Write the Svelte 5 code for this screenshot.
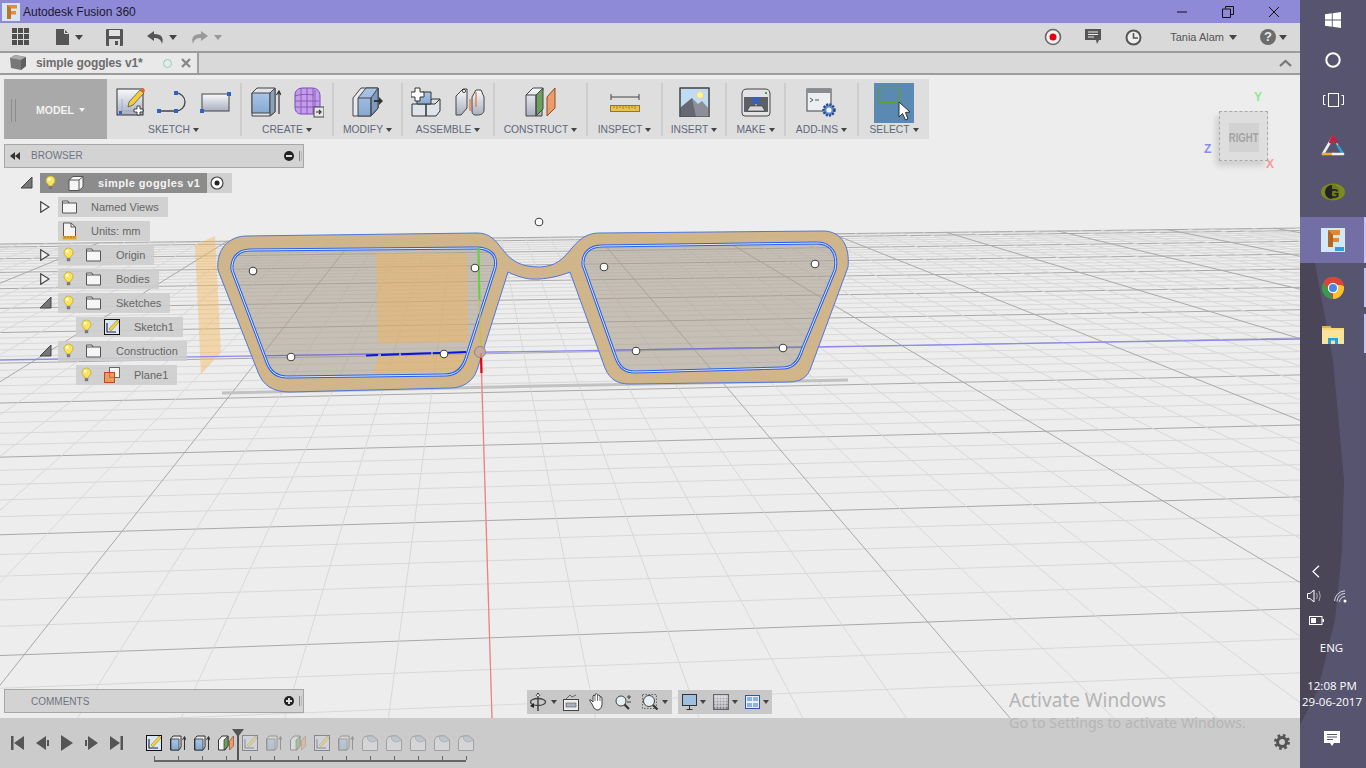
<script>
  const horiz = [];
  for (let i = -2; i <= 51; i++) {
    const n = i / 5;
    const y0 = 100 + 1 / (0.0018 + 0.0005 * n);
    horiz.push({ y0, y1: y0 - (y0 - 27) * 0.0748, major: i % 5 === 0 });
  }
  const depth = [];
  for (let k = -24; k <= 38; k++) {
    const xb = 492 + 103.6 * k;
    const t = 148.1 / (628 + 0.01248 * (xb - 472));
    depth.push({ x1: 472 + (xb - 472) * t, y1: 90 + 628 * t, x2: xb, major: k % 5 === 0 && k !== 0 });
  }
  const points = [[253,271],[475,268],[291,357],[444,354],[604,267],[815,264],[636,351],[783,348],[539,222]];
  const groups = [
    { label: 'SKETCH', w: 135, icons: ['newsketch', 'spline', 'rectangle'], gap: 'g3' },
    { label: 'CREATE', w: 92, icons: ['extrude', 'form'], gap: 'g1' },
    { label: 'MODIFY', w: 69, icons: ['modify'], gap: 'g1' },
    { label: 'ASSEMBLE', w: 92, icons: ['newcomp', 'joint'], gap: 'g1' },
    { label: 'CONSTRUCT', w: 93, icons: ['construct'], gap: 'g1' },
    { label: 'INSPECT', w: 75, icons: ['ruler'], gap: 'g1' },
    { label: 'INSERT', w: 64, icons: ['insert'], gap: 'g1' },
    { label: 'MAKE', w: 59, icons: ['make'], gap: 'g1' },
    { label: 'ADD-INS', w: 73, icons: ['addins'], gap: 'g1' },
    { label: 'SELECT', w: 70, icons: ['select'], gap: 'g1' }
  ];
  const rows = [
    { label: 'Named Views', d: 'd1', exp: 'closed', icon: 'folder' },
    { label: 'Units: mm', d: 'd1', icon: 'units' },
    { label: 'Origin', d: 'd1', exp: 'closed', bulb: true, icon: 'folder' },
    { label: 'Bodies', d: 'd1', exp: 'closed', bulb: true, icon: 'folder' },
    { label: 'Sketches', d: 'd1', exp: 'open', bulb: true, icon: 'folder' },
    { label: 'Sketch1', d: 'd2', bulb: true, icon: 'sk' },
    { label: 'Construction', d: 'd1', exp: 'open', bulb: true, icon: 'folder' },
    { label: 'Plane1', d: 'd2', bulb: true, icon: 'plane' }
  ];
  const steps = [
    ['sk', 1], ['ext', 1], ['ext', 1], ['con', 1], ['sk', 0], ['ext', 0], ['con', 0], ['sk', 0], ['ext', 0],
    ['fil', 0], ['fil', 0], ['fil', 0], ['fil', 0], ['fil', 0]
  ];
</script>

{#snippet bulb()}
  <svg width="11" height="16" viewBox="0 0 11 16"><path d="M5.5 1a4.5 4.5 0 0 0-2.6 8.2c.6.5.8 1 .8 1.8h3.6c0-.8.2-1.3.8-1.8A4.5 4.5 0 0 0 5.5 1z" fill="#fbe45c" stroke="#b8a23a" stroke-width=".7"/><circle cx="4.3" cy="4.3" r="1.6" fill="#fffbd0"/><rect x="3.8" y="11.2" width="3.4" height="3" fill="#777"/></svg>
{/snippet}

{#snippet ic(name)}
  {#if name === 'newsketch'}
    <svg width="30" height="30" viewBox="0 0 30 30"><rect x="1" y="2" width="26" height="26" fill="url(#gSteel)" stroke="#333" stroke-width="1"/><rect x="3" y="24" width="3" height="3" fill="#2f62c8"/><path d="M6 24 L6 12 M6 24 L18 24" stroke="#8da4c8" stroke-width=".7"/><path d="M13 15 L24 3 L28 6 L17 18 L12 20 Z" fill="#f4cf3a" stroke="#555" stroke-width=".8"/><path d="M24 3 L28 6 L29 3 L27 1 Z" fill="#d8663a"/><path d="M21 19h3v3h3v3h-3v3h-3v-3h-3v-3h3z" fill="#fff" stroke="#333" stroke-width=".9"/></svg>
  {:else if name === 'spline'}
    <svg width="32" height="30" viewBox="0 0 32 30"><path d="M2 24 H19 A9 9 0 0 0 19 6" fill="none" stroke="#444" stroke-width="1.3"/><rect x="0" y="22" width="4" height="4" fill="#2f62c8"/><rect x="17" y="22" width="4" height="4" fill="#2f62c8"/><rect x="17" y="4" width="4" height="4" fill="#2f62c8"/></svg>
  {:else if name === 'rectangle'}
    <svg width="31" height="30" viewBox="0 0 31 30"><rect x="2" y="7" width="27" height="17" fill="url(#gSteel)" stroke="#444"/><rect x="0" y="22" width="4" height="4" fill="#2f62c8"/><rect x="27" y="5" width="4" height="4" fill="#2f62c8"/></svg>
  {:else if name === 'extrude'}
    <svg width="30" height="30" viewBox="0 0 30 30"><path d="M1 6 L6 1 H24 V25 L19 29 H1 Z" fill="#dfe3ea" stroke="#444"/><path d="M1 6 H19 V26 H1 Z" fill="url(#gBlue)" stroke="#444"/><path d="M19 6 L24 1 V25 L19 29 Z" fill="#8ea1bb" stroke="#444"/><path d="M28 27 V5 M25.5 8 L28 4 L30 8" fill="none" stroke="#333" stroke-width="1.2"/></svg>
  {:else if name === 'form'}
    <svg width="30" height="31" viewBox="0 0 30 31"><path d="M1 8 C1 3 5 1 9 1 H18 C23 1 26 4 26 9 V20 C26 25 22 27 18 27 H7 C3 27 1 24 1 20 Z" fill="#c49ce8" stroke="#7a4bb8"/><path d="M1 9 C6 7 14 7 20 8 M7 1 V27 M13 1 V27 M19 1 V27 M1 14 H25 M1 20 H25 M21 3 V26" fill="none" stroke="#7a4bb8" stroke-width=".8"/><rect x="20" y="20" width="10" height="10" fill="#e6e6e6" stroke="#444"/><path d="M22 25 H26 M25 23 L27 25 L25 27" fill="none" stroke="#333" stroke-width="1.2"/></svg>
  {:else if name === 'modify'}
    <svg width="31" height="30" viewBox="0 0 31 30"><path d="M1 11 L9 1 H26 V21 L19 29 H1 Z" fill="#e6e9ee" stroke="#444"/><path d="M6 11 L14 1 H26 V21 L19 29 H6 Z" fill="url(#gBlue)" stroke="#444"/><path d="M19 11 L26 1 V21 L19 29 Z" fill="#7e9ac0" stroke="#444"/><path d="M6 11 H19 V29" fill="none" stroke="#444"/><path d="M22 13 H27 V10 L31 14 L27 18 V15 H22 Z" fill="#333"/></svg>
  {:else if name === 'newcomp'}
    <svg width="31" height="30" viewBox="0 0 31 30"><path d="M1 17 H15 V29 H1 Z M15 17 H24 L29 12 V24 L25 29 H15 Z" fill="#dfe3ea" stroke="#333"/><path d="M16 17 L21 12 H29" fill="none" stroke="#333"/><path d="M6 10 L11 5 H20 V17 H6 Z" fill="url(#gBlue)" stroke="#333"/><path d="M4 1h5v4h4v5H9v4H4v-4H0V5h4z" fill="#fff" stroke="#333"/></svg>
  {:else if name === 'joint'}
    <svg width="30" height="30" viewBox="0 0 30 30"><path d="M1 9 L8 2 H12 V21 L6 28 H1 Z" fill="url(#gSteel)" stroke="#444"/><circle cx="9" cy="4" r="1.6" fill="#fff" stroke="#444"/><path d="M17 10 L21 3 L26 3 L29 10 V23 C29 27 25 28 23 28 H20 C18 28 17 26 17 24 Z" fill="url(#gSteel)" stroke="#444"/><path d="M15 12 V24 M21 5 V20" stroke="#e07030" stroke-width="1.2"/></svg>
  {:else if name === 'construct'}
    <svg width="31" height="30" viewBox="0 0 31 30"><path d="M1 8 L8 1 H18 L17 8 V29 H1 Z" fill="url(#gSteel)" stroke="#444"/><path d="M11 8 L18 1 V22 L11 29 Z" fill="#6aa05a" stroke="#444"/><path d="M1 8 H11 V29" fill="none" stroke="#444"/><path d="M22 10 L30 1 V21 L22 29 Z" fill="#ee9b6a" stroke="#8a4a2a"/></svg>
  {:else if name === 'ruler'}
    <svg width="30" height="30" viewBox="0 0 30 30"><path d="M1 7 V13 M1 10 H29 M29 7 V13" stroke="#444" stroke-width="1" fill="none"/><rect x="0.5" y="18.500" width="29" height="6" fill="#ecc248" stroke="#8a7a30"/><path d="M4 19v2M7 19v3M10 19v2M13 19v3M16 19v2M19 19v3M22 19v2M25 19v3" stroke="#7a6a20" stroke-width=".7"/></svg>
  {:else if name === 'insert'}
    <svg width="31" height="30" viewBox="0 0 31 30"><rect x="1" y="1" width="29" height="29" fill="#bfdcf2" stroke="#444"/><circle cx="21" cy="8" r="3.5" fill="#fdf1a8" stroke="#e8c860" stroke-width=".6"/><path d="M1 30 V21 L13 11 L19 17 L23 14 L30 22 V30 Z" fill="#8d8f98"/><path d="M13 11 L17 30 H1 V21 Z" fill="#666873"/><rect x="1" y="1" width="29" height="29" fill="none" stroke="#444"/></svg>
  {:else if name === 'make'}
    <svg width="30" height="30" viewBox="0 0 30 30"><path d="M1 7 Q1 2 6 2 H24 Q29 2 29 7 V26 Q29 29 26 29 H4 Q1 29 1 26 Z" fill="#e3e3e6" stroke="#444"/><circle cx="25" cy="6" r="1" fill="#1a8a2a"/><rect x="3" y="10" width="24" height="15" fill="#5e6068"/><rect x="12" y="10" width="6" height="7" fill="#2f62c8"/><path d="M15 17v3" stroke="#ddd"/><path d="M6 24 L9 19 H21 L24 24 Z" fill="#d8d8d8" stroke="#333" stroke-width=".6"/></svg>
  {:else if name === 'addins'}
    <svg width="31" height="30" viewBox="0 0 31 30"><rect x="1" y="2" width="24" height="22" fill="#eceef2" stroke="#444"/><rect x="1" y="2" width="24" height="4" fill="#8a8c94"/><path d="M4 11 L7 13 L4 15 M9 13 H13" fill="none" stroke="#444" stroke-width=".9"/><circle cx="23" cy="23" r="5.5" fill="#5e8ad0" stroke="#2d4a80" stroke-width="2.5" stroke-dasharray="2 1.2"/><circle cx="23" cy="23" r="2.6" fill="#f0f3fa"/></svg>
  {:else if name === 'select'}
    <svg class="selsvg" width="40" height="40" viewBox="0 0 40 40"><rect width="40" height="40" fill="#5a8ab2"/><rect x="5.5" y="4.500" width="20" height="15" fill="none" stroke="#62a02c" stroke-width="1.200"/><path d="M25 19 V34 L28.500 30.500 L31.500 37 L34 36 L31.500 29.500 L36 29 Z" fill="#fff" stroke="#222" stroke-width=".9"/></svg>
  {:else if name === 'folder'}
    <svg width="15" height="14" viewBox="0 0 15 14"><path d="M.5 13 V1 H6 L7 3 H14.500 V13 Z" fill="#f6f6f6" stroke="#555"/><path d="M.5 3H7" stroke="#555"/></svg>
  {:else if name === 'units'}
    <svg width="15" height="18" viewBox="0 0 15 18"><path d="M1.500 15 V1 H9 L13.500 5 V15 Z" fill="#f4f4f4" stroke="#555"/><path d="M9 1V5H13.500" fill="none" stroke="#555"/><rect x=".5" y="14" width="14" height="3.500" fill="#dda92e"/><path d="M3 14v2M6 14v2M9 14v2M12 14v2" stroke="#7a5a10" stroke-width=".6"/></svg>
  {:else if name === 'sk'}
    <svg width="16" height="16" viewBox="0 0 16 16"><rect x=".5" y=".5" width="15" height="15" fill="#dce7f5" stroke="#111"/><path d="M3 4 V13 H12" fill="none" stroke="#224" stroke-width="1.1"/><path d="M5 10 L13 1 L15 3 L7 12 Z" fill="#f7d23a" stroke="#6a5a10" stroke-width=".4"/></svg>
  {:else if name === 'plane'}
    <svg width="16" height="16" viewBox="0 0 16 16"><rect x="5.500" y=".5" width="10" height="10" fill="#f4f4f4" stroke="#666"/><rect x=".5" y="5.500" width="10" height="10" fill="#ee9a5e" stroke="#c04a1a"/><path d="M5.500 5.500h5v5h-5z" fill="none" stroke="#c04a1a" stroke-width=".6"/></svg>
  {:else if name === 'ext'}
    <svg width="16" height="16" viewBox="0 0 16 16"><path d="M0.500 4 L3 1 H11 V12 L9 15 H0.500 Z" fill="#e6e9ee" stroke="#333"/><path d="M1 4 H9 V15 H1 Z" fill="url(#gBlue)" stroke="#333" stroke-width=".8"/><path d="M14.500 15 V2 M12.500 5 L14.500 1.500 L16 5" fill="none" stroke="#333"/></svg>
  {:else if name === 'con'}
    <svg width="16" height="16" viewBox="0 0 16 16"><path d="M.5 5 L4 1 H10 V11 L7 15 H.5 Z" fill="#f2f3f5" stroke="#333"/><path d="M6 5 L10 1 V11 L6 15 Z" fill="#6aa05a" stroke="#333" stroke-width=".7"/><path d="M11.500 6 L15.500 1 V11 L11.500 15 Z" fill="#ee9b6a" stroke="#8a4a2a" stroke-width=".7"/></svg>
  {:else if name === 'fil'}
    <svg width="16" height="16" viewBox="0 0 16 16"><path d="M.5 5 Q2 1 5 1 H11 L15.500 5 V15.500 H.5 Z" fill="#e8eaee" stroke="#555"/><path d="M5 1 Q5 7 11 7 L15.500 5 L11 1 Z" fill="#a9bcd4" stroke="#555" stroke-width=".6"/></svg>
  {/if}
{/snippet}

<svg class="defs" width="0" height="0" aria-hidden="true">
  <defs>
    <linearGradient id="gSteel" x1="0" y1="0" x2="0" y2="1"><stop offset="0" stop-color="#f8f9fb"/><stop offset="1" stop-color="#a9afbe"/></linearGradient>
    <linearGradient id="gBlue" x1="0" y1="0" x2="0" y2="1"><stop offset="0" stop-color="#a9c6e8"/><stop offset="1" stop-color="#86a8d0"/></linearGradient>
  </defs>
</svg>

<div class="screen">
  <div class="app">
    <header class="titlebar">
      <svg class="applogo" width="18" height="18" viewBox="0 0 18 18"><rect width="18" height="18" fill="#d6e6f2"/><path d="M5 2 H15 V5.500 H9 V8 H14 V11.500 H9 V16 H5 Z" fill="#e08e3a"/><path d="M5 2 L9 5.500 V16 H5 Z" fill="#bd7426"/></svg>
      <span class="apptitle">Autodesk Fusion 360</span>
      <div class="winbtns">
        <svg width="12" height="12" viewBox="0 0 12 12"><path d="M1 6 H11" stroke="#111" stroke-width="1"/></svg>
        <svg width="12" height="12" viewBox="0 0 12 12"><path d="M3.500 2.500 V.5 H11.500 V8.500 H9 M.5 3 H8.500 V11.500 H.5 Z" fill="none" stroke="#111"/></svg>
        <svg width="12" height="12" viewBox="0 0 12 12"><path d="M1 1 L11 11 M11 1 L1 11" stroke="#111" stroke-width="1"/></svg>
      </div>
    </header>

    <div class="qat">
      <svg class="q-grid" width="18" height="18" viewBox="0 0 18 18" fill="#4f4f4f"><rect width="5" height="5"/><rect x="6" width="5" height="5"/><rect x="12" width="5" height="5"/><rect y="6" width="5" height="5"/><rect x="6" y="6" width="5" height="5"/><rect x="12" y="6" width="5" height="5"/><rect y="12" width="5" height="5"/><rect x="6" y="12" width="5" height="5"/><rect x="12" y="12" width="5" height="5"/></svg>
      <svg class="q-file" width="14" height="16" viewBox="0 0 14 16"><path d="M0 0 H8 L13 5 V16 H0 Z" fill="#555"/><path d="M8.500 .5 V4.500 H12.500" fill="none" stroke="#e4e4e4"/></svg>
      <span class="caret q-c1"></span>
      <svg class="q-save" width="17" height="17" viewBox="0 0 17 17"><path d="M0 1 Q0 0 1 0 H16 Q17 0 17 1 V16 Q17 17 16 17 H1 Q0 17 0 16 Z" fill="#555"/><rect x="3" y="1" width="11" height="6" fill="#e2e2e2"/><rect x="3" y="10" width="11" height="7" fill="#d8d8d8"/><rect x="9" y="12" width="3" height="4" fill="#555"/></svg>
      <svg class="q-undo" width="17" height="13" viewBox="0 0 17 13"><path d="M7 0 L0 5 L7 10 V7 C11 7 14 8 15 13 C17 7 15 3 7 3 Z" fill="#555"/></svg>
      <span class="caret q-c2"></span>
      <svg class="q-redo" width="17" height="13" viewBox="0 0 17 13"><path d="M10 0 L17 5 L10 10 V7 C6 7 3 8 2 13 C0 7 2 3 10 3 Z" fill="#999"/></svg>
      <span class="caret light q-c3"></span>
      <div class="q-right">
        <svg class="q-rec" width="18" height="18" viewBox="0 0 18 18"><circle cx="9" cy="9" r="7.500" fill="#f1f1f1" stroke="#666" stroke-width="1.600"/><circle cx="9" cy="9" r="3.500" fill="#e60012"/></svg>
        <svg class="q-cmt" width="17" height="16" viewBox="0 0 17 16"><path d="M0 0 H16 V11 H14 L12 15 L11 11 H0 Z" fill="#555"/><path d="M3 3 H13 M3 5.500 H13 M3 8 H9" stroke="#eee"/></svg>
        <svg class="q-clk" width="17" height="17" viewBox="0 0 17 17"><circle cx="8.500" cy="8.500" r="7" fill="#eee" stroke="#555" stroke-width="2"/><path d="M8.500 4 V9 H13" fill="none" stroke="#555" stroke-width="1.600"/></svg>
        <span class="user">Tania Alam</span>
        <span class="caret q-c4"></span>
        <span class="help">?</span>
        <span class="caret q-c5"></span>
      </div>
    </div>

    <div class="tabbar">
      <div class="tab">
        <svg class="tabcube" width="17" height="16" viewBox="0 0 17 16"><path d="M0 3 L5 0 L16 2 V11 L11 15 L1 13 Z" fill="#777"/><path d="M0 3 L11 5 L16 2 L5 0 Z" fill="#a9a9a9"/><path d="M11 5 V15 L16 11 V2 Z" fill="#5e5e5e"/></svg>
        <span class="tabname">simple goggles v1*</span>
        <span class="tabdot"></span>
        <svg class="tabx" width="10" height="10" viewBox="0 0 10 10"><path d="M1 1 L9 9 M9 1 L1 9" stroke="#888" stroke-width="2.400"/></svg>
      </div>
      <svg class="chev" width="13" height="8" viewBox="0 0 13 8"><path d="M1 7 L6.500 2 L12 7" fill="none" stroke="#777" stroke-width="2.200"/></svg>
    </div>

    <main class="canvas">
      <svg class="scene" width="1300" height="643" viewBox="0 75 1300 643">
        {#each horiz as l}
          <line x1="0" y1={l.y0} x2="1300" y2={l.y1} class={l.major ? 'maj' : 'min'} />
        {/each}
        <line x1="0" y1="244" x2="1300" y2="228" class="maj" />
        {#each depth as l}
          <line x1={l.x1} y1={l.y1} x2={l.x2} y2="718" class={l.major ? 'maj' : 'min'} />
        {/each}
        <path d="M222 393 L540 386 L848 380" fill="none" stroke="#c2c2c2" stroke-width="3"/>
        <polygon points="195,245 215,236 221,352 201,374" fill="#f6b95c" fill-opacity=".45"/>
        <line x1="481" y1="353" x2="492" y2="718" stroke="#f37c7c" stroke-width="1.200"/>
        <line x1="0" y1="360" x2="1300" y2="339" stroke="#8b8bef" stroke-width="1.300"/>
        <path fill="#d0b387" fill-opacity=".97" fill-rule="evenodd" d="M218 270 C216 250 228 236 247 236 L477 233 C490 233 495 240 503 250 C512 262 522 267 540 267 C556 266 562 260 572 248 C582 236 590 233 600 233 L823 231 C842 231 850 247 848 267 L810 370 C805 381 795 382 787 382 L630 384 C618 384 610 380 605 368 L570 272 C560 276 545 280 530 279 C522 278 514 275 508 272 L477 370 C473 382 462 388 450 388 L290 392 C272 392 263 385 258 372 Z M232 270 C231 258 238 250 250 250 L476 248 C490 248 498 255 495 268 L467 355 C463 370 455 375 445 375 L288 377 C276 377 270 372 266 360 Z M583 265 C582 253 590 246 602 246 L817 243 C832 243 838 255 835 270 L802 350 C798 363 792 368 782 368 L635 372 C625 372 620 368 616 358 Z"/>
        <path fill="none" stroke="#4f78dc" stroke-width="1" d="M218 270 C216 250 228 236 247 236 L477 233 C490 233 495 240 503 250 C512 262 522 267 540 267 C556 266 562 260 572 248 C582 236 590 233 600 233 L823 231 C842 231 850 247 848 267 L810 370 C805 381 795 382 787 382 L630 384 C618 384 610 380 605 368 L570 272 C560 276 545 280 530 279 C522 278 514 275 508 272 L477 370 C473 382 462 388 450 388 L290 392 C272 392 263 385 258 372 Z"/>
        <path fill="#a89c8a" fill-opacity=".56" d="M232 270 C231 258 238 250 250 250 L476 248 C490 248 498 255 495 268 L467 355 C463 370 455 375 445 375 L288 377 C276 377 270 372 266 360 Z M583 265 C582 253 590 246 602 246 L817 243 C832 243 838 255 835 270 L802 350 C798 363 792 368 782 368 L635 372 C625 372 620 368 616 358 Z"/>
        <polygon points="376,253 467,253 468,342 378,343" fill="#efb45c" fill-opacity=".5"/>
        <polygon points="378,357 468,353 468,370 373,374" fill="#efb45c" fill-opacity=".5"/>
        <path d="M267 355.700 L466 352.500 M616 350 L803 347" fill="none" stroke="#7474d8" stroke-width="1.100"/>
        <path fill="none" stroke="#2460ee" stroke-width="3" d="M232 270 C231 258 238 250 250 250 L476 248 C490 248 498 255 495 268 L467 355 C463 370 455 375 445 375 L288 377 C276 377 270 372 266 360 Z M583 265 C582 253 590 246 602 246 L817 243 C832 243 838 255 835 270 L802 350 C798 363 792 368 782 368 L635 372 C625 372 620 368 616 358 Z"/>
        <path fill="none" stroke="#e4e8f4" stroke-width="1" d="M232 270 C231 258 238 250 250 250 L476 248 C490 248 498 255 495 268 L467 355 C463 370 455 375 445 375 L288 377 C276 377 270 372 266 360 Z M583 265 C582 253 590 246 602 246 L817 243 C832 243 838 255 835 270 L802 350 C798 363 792 368 782 368 L635 372 C625 372 620 368 616 358 Z"/>
        <path d="M366 355.500 L468 352" stroke="#0a16e0" stroke-width="2" stroke-dasharray="12 3 18 2 30 2" fill="none"/>
        <line x1="478.500" y1="248" x2="479.500" y2="300" stroke="#62d23a" stroke-width="2"/>
        <line x1="479.500" y1="300" x2="481" y2="352" stroke="#c8c040" stroke-width="1"/>
        <line x1="481" y1="353" x2="481.500" y2="373" stroke="#e8000a" stroke-width="2.200"/>
        <circle cx="480" cy="352" r="5.500" fill="#c9a9a0" fill-opacity=".8" stroke="#888"/>
        {#each points as p}
          <circle cx={p[0]} cy={p[1]} r="3.800" fill="#fff" stroke="#444" stroke-width="1.100"/>
        {/each}
      </svg>

      <div class="ribbon">
        <div class="model">
          <span class="grip"></span>
          <span class="modeltxt">MODEL</span>
          <span class="caret white"></span>
        </div>
        {#each groups as g}
          <div class="group" style:width="{g.w}px">
            <div class="icons {g.gap}">
              {#each g.icons as i}{@render ic(i)}{/each}
            </div>
            <div class="glabel">{g.label}<span class="caret small"></span></div>
          </div>
        {/each}
      </div>

      <div class="panel browser">
        <svg class="collapse" width="10" height="8" viewBox="0 0 10 8" fill="#333"><path d="M5 0 V8 L0 4 Z M10 0 V8 L5 4 Z"/></svg>
        <span class="ptitle">BROWSER</span>
        <svg class="pbtn" width="10" height="10" viewBox="0 0 10 10"><circle cx="5" cy="5" r="5" fill="#222"/><rect x="2" y="4" width="6" height="2" fill="#ddd"/></svg>
        <span class="pgrip"></span>
      </div>

      <div class="tree">
        <div class="row d0">
          <svg class="exp" width="12" height="12" viewBox="0 0 12 12"><path d="M0 11 L11 0 V11 Z" fill="#777" stroke="#444"/></svg>
          <div class="rootchip">
            <div class="rootmain">
              <span class="bulbwrap">{@render bulb()}</span>
              <svg class="rootcube" width="16" height="15" viewBox="0 0 16 15"><path d="M1 4 L5 .5 H15 V11 L11 14.500 H1 Z" fill="#f6f6f6" stroke="#555"/><path d="M1 4 H11 V14.500 M11 4 L15 .5" fill="none" stroke="#555"/></svg>
              <span class="rootname">simple goggles v1</span>
            </div>
            <svg class="radio" width="14" height="14" viewBox="0 0 14 14"><circle cx="7" cy="7" r="6" fill="#fff" stroke="#444" stroke-width="1.200"/><circle cx="7" cy="7" r="2.500" fill="#222"/></svg>
          </div>
        </div>
        {#each rows as r}
          <div class="row {r.d}">
            <span class="expbox">
              {#if r.exp === 'closed'}
                <svg width="10" height="12" viewBox="0 0 10 12"><path d="M.7 .7 L9 6 L.7 11.300 Z" fill="#f4f4f4" stroke="#444" stroke-width="1.200"/></svg>
              {:else if r.exp === 'open'}
                <svg width="12" height="12" viewBox="0 0 12 12"><path d="M0 11 L11 0 V11 Z" fill="#777" stroke="#444"/></svg>
              {/if}
            </span>
            <div class="chip">
              {#if r.bulb}<span class="bulbwrap">{@render bulb()}</span>{/if}
              <span class="ico">{@render ic(r.icon)}</span>
              <span class="rlabel">{r.label}</span>
            </div>
          </div>
        {/each}
      </div>

      <div class="cube">
        <span class="axis ay">Y</span>
        <span class="axis az">Z</span>
        <span class="axis ax">X</span>
        <div class="cubeface"><div class="cubeinner"><span class="cubetxt">RIGHT</span></div></div>
      </div>

      <div class="panel comments">
        <span class="ptitle">COMMENTS</span>
        <svg class="pbtn" width="10" height="10" viewBox="0 0 10 10"><circle cx="5" cy="5" r="5" fill="#222"/><path d="M2 4h2V2h2v2h2v2H6v2H4V6H2z" fill="#ddd"/></svg>
        <span class="pgrip"></span>
      </div>

      <div class="navbars">
        <div class="navbar nb1">
          <svg width="18" height="20" viewBox="0 0 18 20"><path d="M9 1 V19" stroke="#222" stroke-width="1.200"/><path d="M7 4 L9 1 L11 4" fill="#fff" stroke="#222" stroke-width=".8"/><ellipse cx="9" cy="10" rx="7.500" ry="3.500" fill="none" stroke="#444" stroke-width="1.300"/><path d="M5 11 L1 14 L5 16 Z" fill="#222"/></svg>
          <span class="caret small c-a"></span>
          <svg class="ni n-fit" width="16" height="17" viewBox="0 0 16 17"><rect x=".5" y="5.500" width="15" height="11" fill="#eee" stroke="#444"/><rect x="3" y="9" width="10" height="4" fill="#aab0bc" stroke="#555" stroke-width=".6"/><path d="M3 5 L7 1 L9 3 L13 1" fill="none" stroke="#666"/></svg>
          <svg class="ni" width="16" height="18" viewBox="0 0 16 18"><path d="M3 11 L1 8 Q0 6 2 7 L4 9 V3 Q5 1 6 3 V1.500 Q7.500 0 8.500 1.500 V2.500 Q10 1 11 3 V4 Q12.500 3 13 5 V12 Q12 17 8 17 Q5 17 3 11 Z" fill="#fff" stroke="#333" stroke-width=".9"/><path d="M6 3 V8 M8.500 2.500 V8 M11 4 V8" stroke="#333" stroke-width=".7"/></svg>
          <svg class="ni" width="17" height="17" viewBox="0 0 17 17"><circle cx="6" cy="7" r="5" fill="#e5f1f6" stroke="#444"/><path d="M9.500 10.500 L14 15" stroke="#333" stroke-width="2.200"/><path d="M12 3 H16 M14 1 V5 M12 8 H16" stroke="#444"/></svg>
          <svg class="ni" width="17" height="17" viewBox="0 0 17 17"><rect x=".5" y=".5" width="14" height="14" fill="none" stroke="#666" stroke-dasharray="1.500 1.500"/><circle cx="7" cy="7" r="5.500" fill="#e5f1f6" stroke="#444"/><path d="M11 11 L15.500 15.500" stroke="#333" stroke-width="2.200"/></svg>
          <span class="caret small c-b"></span>
        </div>
        <div class="navbar nb2">
          <svg width="15" height="17" viewBox="0 0 15 17"><rect x=".5" y=".5" width="14" height="11" fill="#9fbfe0" stroke="#333"/><path d="M7.500 12 V15 M4.500 15.500 H10.500" stroke="#333"/></svg>
          <span class="caret small c-b"></span>
          <svg class="ni2" width="16" height="16" viewBox="0 0 16 16"><defs><linearGradient id="gGrid" x1="0" y1="0" x2="0" y2="1"><stop offset="0" stop-color="#c8c8cc"/><stop offset="1" stop-color="#77777f"/></linearGradient></defs><rect width="16" height="16" fill="url(#gGrid)"/><path d="M3 0V16M6 0V16M9 0V16M12 0V16M0 3H16M0 6H16M0 9H16M0 12H16" stroke="#eee" stroke-width=".8"/><rect x=".5" y=".5" width="15" height="15" fill="none" stroke="#666"/></svg>
          <span class="caret small c-b"></span>
          <svg class="ni2" width="15" height="14" viewBox="0 0 15 14"><rect x=".5" y=".5" width="14" height="13" fill="#e6eefa" stroke="#2d5a9a"/><path d="M2 2h5v4H2zM8 2h5v4H8zM2 8h5v4H2zM8 8h5v4H8z" fill="#8fb3dc"/></svg>
          <span class="caret small c-b"></span>
        </div>
      </div>

      <div class="activate">
        <div class="act1">Activate Windows</div>
        <div class="act2">Go to Settings to activate Windows.</div>
      </div>
    </main>

    <footer class="timeline">
      <div class="controls">
        <svg width="14" height="14" viewBox="0 0 14 14" fill="#555"><rect width="2.500" height="14"/><path d="M13 0 V14 L3 7 Z"/></svg>
        <svg width="14" height="14" viewBox="0 0 14 14" fill="#555"><path d="M10 0 V14 L0 7 Z"/><rect x="11" y="4" width="2" height="6"/></svg>
        <svg width="12" height="16" viewBox="0 0 12 16" fill="#555"><path d="M0 0 L12 8 L0 16 Z"/></svg>
        <svg width="14" height="14" viewBox="0 0 14 14" fill="#555"><path d="M4 0 V14 L14 7 Z"/><rect x="1" y="4" width="2" height="6"/></svg>
        <svg width="14" height="14" viewBox="0 0 14 14" fill="#555"><path d="M1 0 V14 L11 7 Z"/><rect x="11.500" width="2.500" height="14"/></svg>
      </div>
      <div class="track">
        <div class="steps">
          {#each steps as s}
            <span class="step" class:faded={!s[1]}>{@render ic(s[0])}</span>
          {/each}
        </div>
        <div class="ruler">
          {#each steps as s}<span class="tick"></span>{/each}
        </div>
        <span class="playhead"></span>
      </div>
      <svg class="gear" width="16" height="16" viewBox="0 0 16 16"><circle cx="8" cy="8" r="4.500" fill="none" stroke="#555" stroke-width="3"/><circle cx="8" cy="8" r="6.500" fill="none" stroke="#555" stroke-width="3" stroke-dasharray="2.600 2.500"/></svg>
    </footer>
  </div>

  <aside class="taskbar">
    <svg class="wedge" width="66" height="768" viewBox="0 0 66 768"><path d="M0 233 L15 263 L33 360 L44 480 L42 550 L35 620 L18 690 L0 725 Z" fill="#4a4658"/></svg>
    <div class="tbitem sm"><svg width="16" height="16" viewBox="0 0 16 16" fill="#fff"><path d="M0 2.300 L6.800 1.300 V7.600 H0 Z M7.700 1.200 L16 0 V7.600 H7.700 Z M0 8.400 H6.800 V14.700 L0 13.700 Z M7.700 8.400 H16 V16 L7.700 14.800 Z"/></svg></div>
    <div class="tbitem sm"><svg width="16" height="16" viewBox="0 0 16 16"><circle cx="8" cy="8" r="6.700" fill="none" stroke="#fff" stroke-width="2"/></svg></div>
    <div class="tbitem sm"><svg width="21" height="14" viewBox="0 0 21 14" fill="none" stroke="#fff"><rect x="5.500" y=".5" width="10" height="13"/><path d="M2.500 2.500 H.5 V11.500 H2.500 M18.500 2.500 H20.500 V11.500 H18.500"/></svg></div>
    <div class="tbitem t-a"><svg width="24" height="22" viewBox="0 0 24 22" fill="none" stroke-width="2.600" stroke-linecap="round"><path d="M12 2 L2 19" stroke="#eee"/><path d="M13 4 L22 19" stroke="#e8e8ec" stroke-width="1.200"/><path d="M17 11 L22 19" stroke="#2a9fd0"/><path d="M2 19 H12" stroke="#f0b030"/><path d="M12 19 H22" stroke="#eee"/><path d="M9.500 7 L12 2 L15 7" stroke="#c81e3c" stroke-width="3"/></svg></div>
    <div class="tbitem"><svg width="24" height="20" viewBox="0 0 24 20"><ellipse cx="12" cy="10" rx="12" ry="8.500" fill="#7d8a1e"/><circle cx="11" cy="10" r="7.500" fill="#6f7b1a"/><path d="M11 3 A7 7 0 0 0 11 17 Z" fill="#222"/><text x="8" y="16" class="gtxt">G</text></svg></div>
    <div class="tbitem active t-f">
      <svg width="24" height="24" viewBox="0 0 24 24"><rect width="24" height="24" fill="#d2e8f6"/><path d="M7 2 H19 V7 H12 V10 H18 V14 H12 V19 H7 Z" fill="#dc8a34"/><path d="M7 2 L12 7 V19 H7 Z" fill="#b5661f"/><rect x="14" y="19" width="9" height="4" fill="#2a9fd8"/></svg>
      <span class="bar on"></span>
    </div>
    <div class="tbitem t-f">
      <svg width="22" height="22" viewBox="0 0 22 22"><circle cx="11" cy="11" r="11" fill="#db4437"/><path d="M11 22 A11 11 0 0 1 1.500 5.500 L7 14 Z" fill="#2f9e4f"/><path d="M11 22 A11 11 0 0 0 21.800 9 L11 6 Z" fill="#f7c42f"/><path d="M1.500 5.500 A11 11 0 0 1 21.800 8 H11 Z" fill="#db4437"/><circle cx="11" cy="11" r="5.200" fill="#fff"/><circle cx="11" cy="11" r="4" fill="#4a86e8"/></svg>
      <span class="bar"></span>
    </div>
    <div class="tbitem">
      <svg width="22" height="19" viewBox="0 0 22 19"><path d="M0 1 H8 L9.500 3 H22 V19 H0 Z" fill="#f7d777"/><path d="M0 1 H8 L9.500 3 H0 Z" fill="#d9b356"/><rect x="0" y="5" width="22" height="14" fill="#fbe49a"/><path d="M6 13 H16 V19 H13 V15.500 H9 V19 H6 Z" fill="#27a0dc"/></svg>
      <span class="bar"></span>
    </div>
    <div class="spacer"></div>
    <svg class="back" width="8" height="13" viewBox="0 0 8 13"><path d="M7 .7 L1 6.500 L7 12.300" fill="none" stroke="#fff" stroke-width="1.200"/></svg>
    <div class="tray">
      <svg width="16" height="14" viewBox="0 0 16 14" fill="none" stroke="#fff"><path d="M.5 4.500 H3 L7 1 V13 L3 9.500 H.5 Z"/><path d="M9.500 4 Q11 7 9.500 10 M12 2 Q14.500 7 12 12" stroke="#aaa"/></svg>
      <svg width="13" height="13" viewBox="0 0 13 13" fill="none" stroke="#d8d8e0"><path d="M.5 11 A11 11 0 0 1 11 .8 M3 11.500 A8 8 0 0 1 11 3.500 M5.500 12 A5.500 5.500 0 0 1 11 6.500"/><circle cx="11" cy="11" r="1.500" fill="#fff" stroke="none"/></svg>
    </div>
    <svg class="batt" width="15" height="9" viewBox="0 0 15 9"><rect x=".5" y=".5" width="12.500" height="8" fill="none" stroke="#fff"/><rect x="2" y="2" width="5" height="5" fill="#fff"/><rect x="13.500" y="3" width="1.500" height="3" fill="#fff"/></svg>
    <div class="eng">ENG</div>
    <div class="clock">12:08 PM<br/>29-06-2017</div>
    <svg class="notif" width="16" height="15" viewBox="0 0 16 15"><path d="M0 0 H16 V12 H10 L8 15 L6 12 H0 Z" fill="#fff"/><path d="M3 3.500 H13 M3 6 H13 M3 8.500 H9" stroke="#56536f"/></svg>
  </aside>
</div>

<style>
  :global(body) { margin: 0; background: #ededed; }
  .defs { position: absolute; }
  .screen { display: flex; width: 1366px; height: 768px; overflow: hidden; font-family: "Liberation Sans", Arial, sans-serif; color: #666; }
  .app { width: 1300px; display: flex; flex-direction: column; flex: none; }
  svg { display: block; flex: none; }

  .caret { display: inline-block; flex: none; width: 0; height: 0; border-left: 4px solid transparent; border-right: 4px solid transparent; border-top: 5px solid #444; }
  .caret.light { border-top-color: #999; }
  .caret.white { border-top-color: #f2f2f2; border-left-width: 3.500px; border-right-width: 3.500px; border-top-width: 4px; }
  .caret.small { border-left-width: 3px; border-right-width: 3px; border-top-width: 4px; }

  .titlebar { height: 23px; background: #8f8ad8; display: flex; align-items: center; flex: none; }
  .applogo { margin-left: 2px; }
  .apptitle { margin-left: 3px; font-size: 12px; color: #1a1a2a; }
  .winbtns { margin-left: auto; display: flex; gap: 34px; padding-right: 20px; align-items: center; }

  .qat { height: 28px; background: #d9d9d9; border-bottom: 2px solid #9c9c9c; display: flex; align-items: center; flex: none; }
  .q-grid { margin-left: 12px; }
  .q-file { margin-left: 26px; }
  .q-c1 { margin-left: 5px; }
  .q-save { margin-left: 23px; }
  .q-undo { margin-left: 24px; }
  .q-c2 { margin-left: 5px; }
  .q-redo { margin-left: 14px; }
  .q-c3 { margin-left: 6px; }
  .q-right { margin-left: auto; display: flex; align-items: center; }
  .q-cmt { margin-left: 23px; }
  .q-clk { margin-left: 23px; }
  .user { margin-left: 28px; font-size: 11px; color: #555; }
  .q-c4 { margin-left: 5px; }
  .help { margin-left: 23px; width: 16px; height: 16px; border-radius: 50%; background: #6c6c6c; color: #e8e8e8; font-weight: bold; font-size: 13px; line-height: 16px; text-align: center; }
  .q-c5 { margin-left: 3px; margin-right: 13px; }

  .tabbar { height: 20px; background: #d9d9d9; border-bottom: 2px solid #9c9c9c; display: flex; align-items: center; flex: none; position: relative; z-index: 1; }
  .tab { width: 197px; height: 20px; background: #e9e9e9; border-right: 2px solid #a0a0a0; display: flex; align-items: center; }
  .tabcube { margin-left: 10px; }
  .tabname { margin-left: 9px; font-size: 12px; font-weight: bold; color: #6d6d6d; width: 120px; white-space: nowrap; letter-spacing: -.12px; }
  .tabdot { margin-left: 7px; width: 7px; height: 7px; border: 1px solid #7fd4c0; border-radius: 50%; }
  .tabx { margin-left: 9px; }
  .chev { margin-left: auto; margin-right: 8px; }

  .canvas { position: relative; flex: 1; background: #ededed; }
  .scene { position: absolute; left: 0; top: 0; }
  .maj { stroke: #a9a9a9; stroke-width: 1; }
  .min { stroke: #d8d8d8; stroke-width: 1; }

  .ribbon { position: absolute; left: 4px; top: 4px; height: 60px; background: #dedede; display: flex; }
  .model { width: 103px; background: #a9a9a9; display: flex; align-items: center; flex: none; padding-top: 2px; box-sizing: border-box; }
  .grip { width: 3px; height: 23px; border-left: 1px solid #8c8c8c; border-right: 1px solid #8c8c8c; margin-left: 7px; }
  .modeltxt { margin-left: 20px; margin-right: 5px; color: #f2f2f2; font-weight: bold; font-size: 10.500px; }
  .group { display: flex; flex-direction: column; align-items: center; border-right: 2px solid #cdcdcd; box-sizing: border-box; margin: 4px 0 3px; height: 53px; }
  .group:last-child { border-right: none; }
  .icons { display: flex; align-items: flex-start; height: 38px; padding-top: 4px; box-sizing: border-box; }
  .selsvg { margin-top: -4px; }
  .g3 { gap: 11px; }
  .g1 { gap: 13px; }
  .glabel { display: flex; align-items: center; gap: 3px; font-size: 10.300px; color: #5f687c; line-height: 12px; margin-top: 3px; white-space: nowrap; }

  .panel { position: absolute; left: 4px; width: 298px; height: 22px; background: #d3d3d3; border: 1px solid #a6a6a6; display: flex; align-items: center; }
  .browser { top: 69px; }
  .comments { top: 614px; }
  .ptitle { font-size: 10px; color: #6f7484; }
  .browser .ptitle { margin-left: 11px; padding-bottom: 2px; }
  .comments .ptitle { margin-left: 26px; }
  .collapse { margin-left: 5px; }
  .pbtn { margin-left: auto; }
  .pgrip { width: 3px; height: 10px; box-sizing: border-box; margin: 0 1px 0 5px; border-left: 1px solid #888; border-right: 1px solid #bbb; }

  .tree { position: absolute; left: 0; top: 98px; display: flex; flex-direction: column; gap: 4px; }
  .row { display: flex; align-items: center; height: 20px; }
  .d0 { padding-left: 21px; }
  .d1 { padding-left: 40px; }
  .d2 { padding-left: 58px; }
  .exp { margin-right: 7px; }
  .expbox { width: 18px; flex: none; display: flex; align-items: center; }
  .chip { height: 20px; display: flex; align-items: center; background: rgba(205,205,205,.88); padding: 0 9px 0 4px; font-size: 11px; color: #666; }
  .bulbwrap { width: 24px; padding-left: 1px; flex: none; box-sizing: border-box; }
  .ico { width: 30px; flex: none; display: flex; }
  .ico:first-child { width: 29px; }
  .rlabel { white-space: nowrap; }
  .rootchip { display: flex; align-items: center; height: 20px; background: #d0d0d0; width: 192px; }
  .rootmain { display: flex; align-items: center; background: #8c8c8c; height: 20px; width: 167px; padding-left: 4px; box-sizing: border-box; flex: none; }
  .rootcube { margin-right: 14px; }
  .rootname { color: #f4f4f4; font-weight: bold; font-size: 11px; letter-spacing: .4px; white-space: nowrap; }
  .radio { margin-left: 3px; }

  .cube { position: absolute; left: 1200px; top: 15px; width: 80px; height: 85px; }
  .cubeface { position: absolute; left: 19px; top: 21px; width: 47px; height: 48px; background: #dedede; border: 1px dashed #aaa; box-shadow: -3px 5px 6px rgba(0,0,0,.13); display: flex; align-items: center; justify-content: center; }
  .cubeinner { background: #d2d2d2; width: 30px; height: 29px; margin-top: 3px; margin-left: 1px; display: flex; align-items: center; justify-content: center; overflow: hidden; }
  .cubetxt { display: block; flex: none; font-size: 12px; font-weight: bold; color: #a3a3a3; transform: scaleX(.8); }
  .axis { position: absolute; font-size: 12px; font-weight: bold; }
  .ay { left: 54px; top: 0; color: #8ee88e; }
  .az { left: 4px; top: 52px; color: #8a8cf0; }
  .ax { left: 66px; top: 67px; color: #f59a9a; }

  .navbars { position: absolute; left: 527px; top: 615px; display: flex; gap: 6px; }
  .navbar { height: 24px; background: #c8c8c8; display: flex; align-items: center; padding: 0 2px; box-sizing: border-box; }
  .nb1 { width: 145px; }
  .nb2 { width: 94px; padding-left: 4px; }
  .c-a { margin-left: 4px; }
  .c-b { margin-left: 3px; }
  .ni { margin-left: 10px; }
  .n-fit { margin-left: 6px; }
  .ni2 { margin-left: 7px; }

  .activate { position: absolute; left: 1009px; top: 613px; z-index: 3; white-space: nowrap; font-family: "Noto Sans", "Open Sans", sans-serif; pointer-events: none; }
  .act1 { font-size: 19px; line-height: 24px; color: #b4b4b4; }
  .act2 { font-size: 14.300px; line-height: 21px; color: #b6b6b6; }

  .timeline { height: 50px; background: #cbcbcb; flex: none; display: flex; position: relative; }
  .controls { display: flex; align-items: center; gap: 11px; height: 50px; margin-left: 11px; width: 135px; flex: none; }
  .track { position: relative; width: 340px; padding-top: 17px; flex: none; }
  .steps { display: flex; gap: 8px; }
  .step { width: 16px; display: block; }
  .step.faded { opacity: .35; }
  .ruler { margin: 5px 0 0 8px; width: 312px; height: 4px; border-bottom: 2px solid #666; display: flex; }
  .tick { width: 24px; flex: none; border-left: 1px solid #666; box-sizing: border-box; }
  .tick:last-child { width: 0; }
  .playhead { position: absolute; left: 91px; top: 11px; width: 2px; height: 31px; background: #555; }
  .playhead::before { content: ""; position: absolute; left: -5px; top: 0; border-left: 6px solid transparent; border-right: 6px solid transparent; border-top: 8px solid #555; }
  .gear { margin-left: auto; margin-right: 10px; margin-top: 16px; }

  .taskbar { position: relative; width: 66px; height: 768px; background: #57546f; flex: none; display: flex; flex-direction: column; align-items: center; color: #fff; font-family: "Open Sans", "Noto Sans", sans-serif; }
  .wedge { position: absolute; left: 0; top: 0; }
  .tbitem { position: relative; width: 66px; height: 46px; display: flex; align-items: center; justify-content: center; flex: none; }
  .tbitem.sm { height: 40px; }
  .t-a { margin-top: 3px; }
  .t-f { margin-top: 2px; }
  .tbitem.active { background: #736fa4; }
  .bar { position: absolute; right: 0; top: 3px; bottom: 4px; width: 2px; background: #c9c5f0; }
  .bar.on { top: 0; bottom: 0; }
  .gtxt { font: bold 13px "Liberation Sans", sans-serif; fill: #222; }
  .spacer { height: 208px; flex: none; }
  .back { position: relative; margin-right: 34px; }
  .tray { position: relative; display: flex; gap: 11px; margin: 11px 0 0 -12px; align-items: center; }
  .batt { position: relative; margin: 13px 33px 0 0; }
  .eng { position: relative; font-size: 11.500px; margin: 15px 3px 0 0; }
  .clock { position: relative; font-size: 11.500px; line-height: 16px; text-align: center; margin: 23px 2px 0 0; white-space: nowrap; }
  .notif { position: relative; margin: 21px 2px 0 0; }
</style>
